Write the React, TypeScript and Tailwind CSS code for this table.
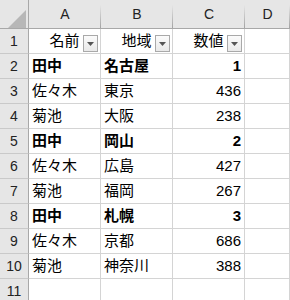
import React from 'react';

type Row = { name: string; area: string; value: string; bold?: boolean };

const rows: Row[] = [
  { name: '田中', area: '名古屋', value: '1', bold: true },
  { name: '佐々木', area: '東京', value: '436' },
  { name: '菊池', area: '大阪', value: '238' },
  { name: '田中', area: '岡山', value: '2', bold: true },
  { name: '佐々木', area: '広島', value: '427' },
  { name: '菊池', area: '福岡', value: '267' },
  { name: '田中', area: '札幌', value: '3', bold: true },
  { name: '佐々木', area: '京都', value: '686' },
  { name: '菊池', area: '神奈川', value: '388' },
];

const cols = 'grid grid-cols-[29px_72px_72px_72px_1fr]';
const headFont = { fontFamily: '"Liberation Sans", Arial, sans-serif' };
const cellFont = { fontFamily: '"Liberation Sans", "Noto Sans CJK JP", sans-serif' };

const FilterButton: React.FC = () => (
  <div className="absolute right-[2px] bottom-[1px] w-[15px] h-[17px] border border-[#a9a9a9] bg-gradient-to-b from-[#fbfbfb] to-[#e9e9e9] flex items-center justify-center">
    <svg width="7" height="4" viewBox="0 0 7 4">
      <path d="M0 0H7L3.5 4Z" fill="#555555" />
    </svg>
  </div>
);

const RowHead: React.FC<{ n: number }> = ({ n }) => (
  <div
    className="h-[25px] bg-[#e6e6e6] border-r border-r-[#a8a8a8] border-b border-b-[#c9c9c9] flex items-center justify-center text-[14px] text-[#222]"
    style={headFont}
  >
    {n}
  </div>
);

const Cell: React.FC<{ children?: React.ReactNode; right?: boolean; bold?: boolean; filter?: boolean; center?: boolean }> = ({
  children,
  right,
  bold,
  filter,
  center,
}) => (
  <div
    className={`relative h-[25px] border-r border-b border-[#d4d4d4] flex items-center text-[15px] text-black whitespace-nowrap overflow-hidden ${
      right ? 'justify-end pr-[3px]' : center ? 'justify-center' : 'pl-[3px]'
    } ${bold ? 'font-bold' : ''}`}
    style={cellFont}
  >
    {children}
    {filter && <FilterButton />}
  </div>
);

const ColHead: React.FC<{ label: string }> = ({ label }) => (
  <div className="relative h-[29px] bg-[#e6e6e6] border-b border-b-[#a8a8a8] flex items-end justify-center pb-[3px] text-[14px] text-[#222]" style={headFont}>
    {label}
    <div className="absolute right-0 top-[5px] bottom-0 w-px bg-gradient-to-b from-[#e6e6e6] to-[#a3a3a3]" />
  </div>
);

const App: React.FC = () => {
  return (
    <div className="w-[290px] h-[300px] overflow-hidden bg-white">
      <div className={cols}>
        <div className="relative h-[29px] bg-[#e6e6e6] border-b border-b-[#a8a8a8] border-r border-r-[#a8a8a8]">
          <svg className="absolute left-[8px] top-[10px]" width="18" height="18" viewBox="0 0 18 18">
            <path d="M18 0V18H0Z" fill="#b7b7b7" />
          </svg>
        </div>
        <ColHead label="A" />
        <ColHead label="B" />
        <ColHead label="C" />
        <ColHead label="D" />
      </div>

      <div className={cols}>
        <RowHead n={1} />
        <Cell center filter>
          名前
        </Cell>
        <Cell center filter>
          地域
        </Cell>
        <Cell center filter>
          数値
        </Cell>
        <Cell />
      </div>

      {rows.map((r, i) => (
        <div key={i} className={cols}>
          <RowHead n={i + 2} />
          <Cell bold={r.bold}>{r.name}</Cell>
          <Cell bold={r.bold}>{r.area}</Cell>
          <Cell right bold={r.bold}>
            {r.value}
          </Cell>
          <Cell />
        </div>
      ))}

      <div className={cols}>
        <RowHead n={11} />
        <Cell />
        <Cell />
        <Cell />
        <Cell />
      </div>
    </div>
  );
};

export default App;
